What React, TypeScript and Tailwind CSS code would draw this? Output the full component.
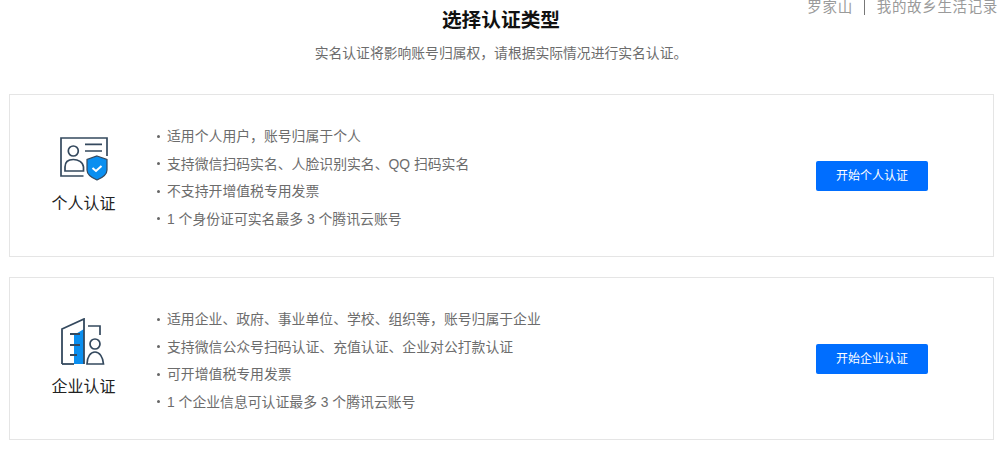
const font = { fontFamily: '"Liberation Sans", "Noto Sans CJK SC", sans-serif' };

function PersonIcon() {
  return (
    <svg width="48" height="44" viewBox="0 0 48 44" fill="none" className="block">
      <path d="M23.500 39H1V1h46v18" stroke="#34495e" strokeWidth="1.700" />
      <path d="M25 7.300h17M25 14h17" stroke="#34495e" strokeWidth="1.700" />
      <circle cx="13.300" cy="14" r="5" stroke="#34495e" strokeWidth="1.700" />
      <path d="M5 34v-4c0-5 3.500-7.500 8.300-7.500S23 25 23.500 30v4z" stroke="#34495e" strokeWidth="1.700" />
      <path d="M37 19l10 3.500V33c0 4.500-4.500 7.700-10 10-5.500-2.300-10-5.500-10-10V22.500z" fill="#0a8ff0" stroke="#34495e" strokeWidth="1.200" />
      <path d="M32.500 31l3.500 3 5.500-5" stroke="#fff" strokeWidth="2" />
    </svg>
  );
}

function BuildingIcon() {
  return (
    <svg width="46" height="47" viewBox="0 0 46 47" fill="none" className="block">
      <path d="M13 17l10-6v35H13z" fill="#0a8ff0" />
      <path d="M1 46V11L23 1v45" stroke="#34495e" strokeWidth="1.800" />
      <path d="M1 46h12" stroke="#34495e" strokeWidth="1.800" />
      <path d="M9 16h10M9 27h10M9 37h7" stroke="#34495e" strokeWidth="1.800" />
      <path d="M27 8h12v9" stroke="#34495e" strokeWidth="1.700" />
      <circle cx="34" cy="26" r="5" stroke="#34495e" strokeWidth="1.700" />
      <path d="M26 46c0-7 3.500-12 8-12s8 5 8.500 12z" stroke="#34495e" strokeWidth="1.700" />
    </svg>
  );
}

function Card({ icon, name, items, action }: { icon: React.ReactNode; name: string; items: string[]; action: string }) {
  return (
    <section className="h-[163px] border border-[#e5e5e5] bg-white flex items-center">
      <div className="w-[146px] shrink-0 flex flex-col items-center pb-[2px] pl-[1px]">
        <div className="h-[50px] flex items-center">{icon}</div>
        <div className="mt-[8px] text-[16px] leading-[24px] text-[#222]">{name}</div>
      </div>
      <ul className="flex-1 flex flex-col gap-[3.500px] pt-[4px] text-[13.850px] leading-[24px] text-[#6c6c6c]">
        {items.map((t) => (
          <li key={t} className="flex items-center">
            <span className="w-[3px] h-[3px] rounded-full bg-[#666] ml-[1px] mr-[7px]" />
            <span className="whitespace-pre">{t}</span>
          </li>
        ))}
      </ul>
      <button className="w-[112px] h-[30px] mr-[65px] rounded-[2px] bg-[#006eff] text-white text-[12px]">{action}</button>
    </section>
  );
}

export default function App() {
  return (
    <div style={font} className="w-[1000px] h-[451px] bg-white overflow-hidden px-[9px] flex flex-col relative">
      <div className="absolute top-0 right-[2px] flex items-center text-[14.500px] leading-[15px] tracking-[0.65px] text-[#9a9a9a]">
        <span>罗家山</span>
        <span className="w-px h-[15px] bg-[#777] ml-[11px] mr-[12px]" />
        <span>我的故乡生活记录</span>
      </div>
      <h1 className="mt-[7px] text-center text-[19.700px] leading-[26px] font-bold text-[#111] pl-[2px]">选择认证类型</h1>
      <p className="mt-[8px] mb-[-1px] text-center text-[13.800px] leading-[26px] text-[#6c6c6c] pl-[2px]">实名认证将影响账号归属权，请根据实际情况进行实名认证。</p>
      <div className="mt-[28px] flex flex-col gap-[20px] w-[985px]">
        <Card
          icon={<PersonIcon />}
          name="个人认证"
          action="开始个人认证"
          items={["适用个人用户，账号归属于个人", "支持微信扫码实名、人脸识别实名、QQ 扫码实名", "不支持开增值税专用发票", "1 个身份证可实名最多 3 个腾讯云账号"]}
        />
        <Card
          icon={<BuildingIcon />}
          name="企业认证"
          action="开始企业认证"
          items={["适用企业、政府、事业单位、学校、组织等，账号归属于企业", "支持微信公众号扫码认证、充值认证、企业对公打款认证", "可开增值税专用发票", "1 个企业信息可认证最多 3 个腾讯云账号"]}
        />
      </div>
    </div>
  );
}
